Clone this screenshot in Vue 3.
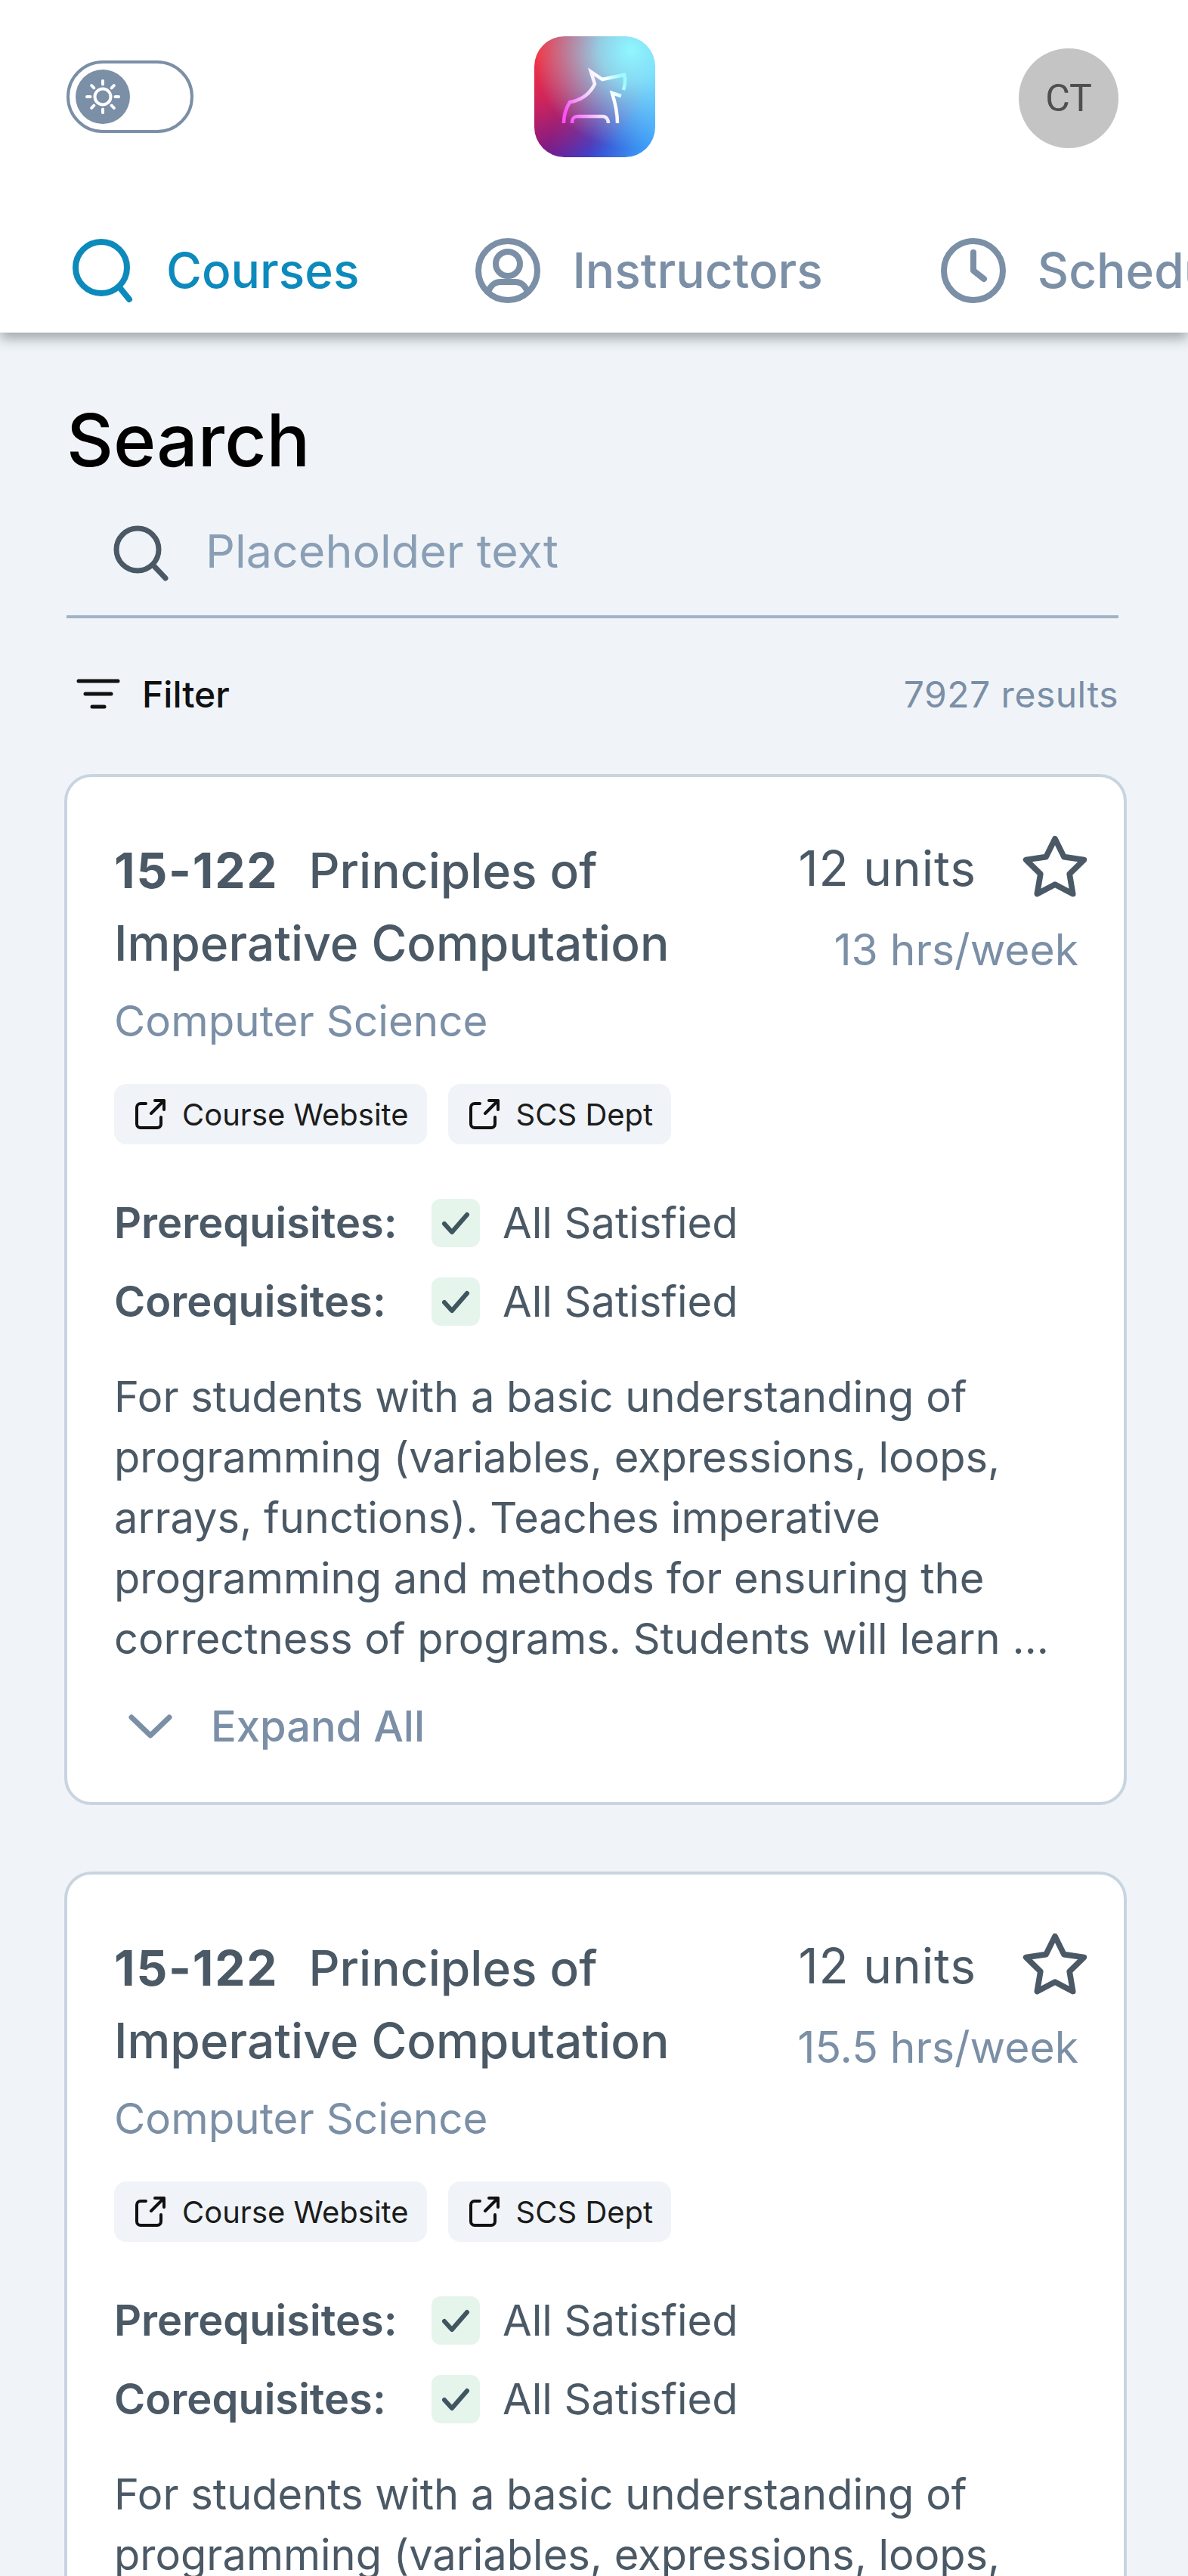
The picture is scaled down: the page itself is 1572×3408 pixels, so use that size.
<script setup>
const courses = [{ hrs: '13 hrs/week' }, { hrs: '15.5 hrs/week' }]
const description = 'For students with a basic understanding of programming (variables, expressions, loops, arrays, functions). Teaches imperative programming and methods for ensuring the correctness of programs. Students will learn …'
const chips = ['Course Website', 'SCS Dept']
const reqs = ['Prerequisites:', 'Corequisites:']
const rays = [0, 45, 90, 135, 180, 225, 270, 315]
</script>

<template>
  <div class="page">
    <header class="header">
      <div class="top">
        <div class="toggle">
          <div class="knob">
            <svg width="48" height="48" viewBox="0 0 48 48" fill="none" stroke="#fff" stroke-width="4" stroke-linecap="round">
              <circle cx="24" cy="24" r="10.5" />
              <line v-for="r in rays" :key="r" x1="24" y1="3" x2="24" y2="7.5" :transform="`rotate(${r} 24 24)`" />
            </svg>
          </div>
        </div>
        <div class="logo">
          <svg width="160" height="160" viewBox="0 0 160 160" fill="none" stroke="url(#dog)" stroke-width="4.5">
            <defs>
              <linearGradient id="dog" gradientUnits="userSpaceOnUse" x1="40" y1="100" x2="118" y2="60">
                <stop offset="0" stop-color="#fb4ffb" />
                <stop offset="0.5" stop-color="#f2e6ff" />
                <stop offset="0.75" stop-color="#ffffff" />
                <stop offset="1" stop-color="#9ffaff" />
              </linearGradient>
            </defs>
            <path d="M39 115C39 104 42 95 47 87C62 85 74 76 80 63L75 47L90 57L119 51C121 58 120 65 118 71" />
            <path d="M115 79L103 75C107 88 110 100 110 115" />
            <path d="M50 115V113C50 109 53 106 57 106H91C95 106 98 110 98 115" />
          </svg>
        </div>
        <div class="avatar">CT</div>
      </div>
      <nav class="tabs">
        <div class="tab active">
          <svg class="tab-icon" viewBox="0 0 88 88" fill="none" stroke="currentColor" stroke-width="8" stroke-linecap="round">
            <circle cx="38" cy="40" r="34" />
            <line x1="62" y1="66" x2="75" y2="82" />
          </svg>
          <span>Courses</span>
        </div>
        <div class="tab">
          <svg class="tab-icon" viewBox="0 0 88 88" fill="none" stroke="currentColor" stroke-width="8" stroke-linecap="round">
            <circle cx="44" cy="44" r="39" />
            <circle cx="44" cy="35" r="16" />
            <path d="M18 72C22 62 28 59 34 59H54C60 59 66 62 70 72" />
          </svg>
          <span>Instructors</span>
        </div>
        <div class="tab">
          <svg class="tab-icon" viewBox="0 0 88 88" fill="none" stroke="currentColor" stroke-width="8" stroke-linecap="round" stroke-linejoin="round">
            <circle cx="44" cy="44" r="39" />
            <path d="M44 20V44L58 55" />
          </svg>
          <span>Schedules</span>
        </div>
      </nav>
    </header>

    <main class="content">
      <h1 class="title">Search</h1>
      <div class="search">
        <svg width="76" height="76" viewBox="0 0 76 76" fill="none" stroke="#4a5965" stroke-width="7" stroke-linecap="round">
          <circle cx="34" cy="34" r="28" />
          <line x1="55" y1="55" x2="71" y2="72" />
        </svg>
        <span>Placeholder text</span>
      </div>
      <div class="filter-row">
        <div class="filter">
          <svg width="60" height="44" viewBox="0 0 60 44" fill="none" stroke="#111" stroke-width="5" stroke-linecap="round">
            <line x1="4" y1="5" x2="56" y2="5" />
            <line x1="13" y1="22" x2="47" y2="22" />
            <line x1="22" y1="39" x2="38" y2="39" />
          </svg>
          <span>Filter</span>
        </div>
        <span class="results">7927 results</span>
      </div>

      <article v-for="course in courses" :key="course.hrs" class="card">
        <div class="card-head">
          <div class="card-title">
            <h2><b>15-122</b><span class="course-name">Principles of Imperative Computation</span></h2>
            <div class="dept">Computer Science</div>
          </div>
          <div class="meta">
            <div class="units-row">
              <span class="units">12 units</span>
              <svg class="star" viewBox="0 0 24 24" fill="none" stroke="#4a5965" stroke-width="2" stroke-linejoin="round">
                <polygon points="12 2 15.09 8.26 22 9.27 17 14.14 18.18 21.02 12 17.77 5.82 21.02 7 14.14 2 9.27 8.91 8.26 12 2" />
              </svg>
            </div>
            <div class="hours">{{ course.hrs }}</div>
          </div>
        </div>
        <div class="chips">
          <div v-for="chip in chips" :key="chip" class="chip">
            <svg width="40" height="40" viewBox="0 0 40 40" fill="none" stroke="#111" stroke-width="4" stroke-linecap="round" stroke-linejoin="round">
              <path d="M14 6H7a5 5 0 0 0-5 5V33a5 5 0 0 0 5 5H29a5 5 0 0 0 5-5V24" />
              <path d="M26 2H38V14M38 2L21 19" />
            </svg>
            <span>{{ chip }}</span>
          </div>
        </div>
        <div class="reqs">
          <div v-for="req in reqs" :key="req" class="req">
            <b>{{ req }}</b>
            <span class="check">
              <svg width="44" height="44" viewBox="0 0 44 44" fill="none" stroke="#3f5560" stroke-width="6" stroke-linecap="round" stroke-linejoin="round">
                <path d="M7 23L17 34L37 11" />
              </svg>
            </span>
            <span>All Satisfied</span>
          </div>
        </div>
        <p class="desc">{{ description }}</p>
        <div class="expand">
          <svg width="60" height="36" viewBox="0 0 60 36" fill="none" stroke="#7b8fa6" stroke-width="7" stroke-linecap="round" stroke-linejoin="round">
            <path d="M5 6L30 30L55 6" />
          </svg>
          <span>Expand All</span>
        </div>
      </article>
    </main>
  </div>
</template>

<style>
html, body { margin: 0; background: #f0f4f8; }
</style>

<style scoped>
* { box-sizing: border-box; }
.page {
  width: 1572px;
  height: 3408px;
  overflow: hidden;
  background: #f0f4f8;
  font-family: Inter, "Liberation Sans", sans-serif;
  color: #4a5965;
}
.header {
  position: relative;
  height: 440px;
  background: #fff;
  box-shadow: 0 8px 16px rgba(60, 70, 75, 0.45);
  overflow: hidden;
  clip-path: inset(0 0 -40px 0);
}
.top {
  display: flex;
  justify-content: space-between;
  align-items: center;
  height: 256px;
  padding: 0 92px 0 88px;
}
.toggle {
  width: 168px;
  height: 96px;
  border: 4px solid #7b8fa6;
  border-radius: 48px;
  padding: 8px;
}
.knob {
  width: 72px;
  height: 72px;
  border-radius: 50%;
  background: #7b8fa6;
  display: flex;
  align-items: center;
  justify-content: center;
}
.logo {
  width: 160px;
  height: 160px;
  margin-right: 30px;
  border-radius: 40px;
  background:
    radial-gradient(circle at 80% 12%, #90f7ff 0, rgba(144, 247, 255, 0.8) 22%, rgba(144, 247, 255, 0) 68%),
    radial-gradient(circle at 0% 12%, #f8323f 0, rgba(225, 40, 80, 0.85) 30%, rgba(200, 30, 90, 0) 75%),
    linear-gradient(105deg, #8a0f80 0%, #5a189a 28%, #3a3fca 55%, #3a8cf0 85%, #40a8ff 100%);
  display: flex;
}
.avatar {
  width: 132px;
  height: 132px;
  margin-top: 4px;
  border-radius: 50%;
  background: #c4c4c4;
  color: #4f4f4f;
  font-family: Roboto, sans-serif;
  font-size: 50px;
  display: flex;
  align-items: center;
  justify-content: center;
}
.tabs {
  display: flex;
  gap: 155px;
  padding: 54px 0 0 96px;
  font-size: 64px;
  font-weight: 500;
  color: #7b8fa6;
}
.tab {
  display: flex;
  align-items: center;
  gap: 41px;
  flex: none;
  line-height: 96px;
}
.tab.active { gap: 36px; margin-right: -2px; color: #0d8abc; }
.tab-icon { width: 88px; height: 88px; flex: none; }
.content { padding: 0 92px 0 88px; }
.title {
  margin: 0;
  padding-top: 84px;
  font-size: 96px;
  font-weight: 450;
  line-height: 116px;
  color: #000;
}
.search {
  display: flex;
  align-items: center;
  gap: 48px;
  height: 170px;
  margin-top: 8px;
  padding-left: 60px;
  border-bottom: 4px solid #9fb3c8;
  font-size: 61px;
  color: #8a9fb5;
}
.search span { position: relative; top: -2px; }
.filter-row {
  display: flex;
  justify-content: space-between;
  align-items: center;
  margin-top: 56px;
  height: 88px;
  font-size: 48px;
}
.filter {
  display: flex;
  align-items: center;
  gap: 28px;
  padding-left: 12px;
  color: #111;
  font-weight: 500;
}
.results { color: #7b8fa6; letter-spacing: 0.5px; }
.card {
  width: 1406px;
  height: 1364px;
  margin: 62px 0 88px -3px;
  padding: 76px 45px 0 62px;
  background: #fff;
  border: 4px solid #c8d5e0;
  border-radius: 36px;
}
.card-head {
  display: flex;
  justify-content: space-between;
  align-items: flex-start;
}
.card-title { width: 800px; }
h2 {
  margin: 0;
  font-size: 64px;
  line-height: 96px;
  font-weight: 500;
}
h2 b { font-weight: 700; letter-spacing: 1.8px; margin-right: 40px; }
.dept {
  font-size: 56.5px;
  line-height: 72px;
  margin-top: 19px;
  color: #7b8fa6;
}
.meta { display: flex; flex-direction: column; align-items: flex-end; }
.units-row {
  display: flex;
  align-items: center;
  gap: 58px;
  height: 88px;
  font-size: 64px;
  letter-spacing: 0.9px;
}
.star { width: 92px; height: 92px; flex: none; }
.hours {
  margin-top: 29px;
  margin-right: 15px;
  font-size: 57px;
  line-height: 72px;
  color: #7b8fa6;
}
.chips {
  display: flex;
  gap: 28px;
  margin-top: 47px;
}
.chip {
  display: flex;
  align-items: center;
  gap: 22px;
  height: 80px;
  padding: 0 24px 0 28px;
  border-radius: 16px;
  background: #f0f4f8;
  color: #1c1c1c;
  font-size: 40px;
}
.reqs {
  display: flex;
  flex-direction: column;
  gap: 40px;
  margin-top: 72px;
}
.req {
  position: relative;
  display: flex;
  align-items: center;
  height: 64px;
  font-size: 56px;
}
.req b { width: 420px; font-weight: 600; }
.check {
  width: 64px;
  height: 64px;
  margin-right: 30px;
  border-radius: 12px;
  background: #e6f5ec;
  display: flex;
  align-items: center;
  justify-content: center;
}
.desc {
  margin: 54px 0 0;
  font-size: 56px;
  line-height: 80px;
}
.expand {
  display: flex;
  align-items: center;
  gap: 50px;
  margin-top: 36px;
  padding-left: 18px;
  height: 80px;
  font-size: 56px;
  font-weight: 500;
  color: #7b8fa6;
}
</style>
